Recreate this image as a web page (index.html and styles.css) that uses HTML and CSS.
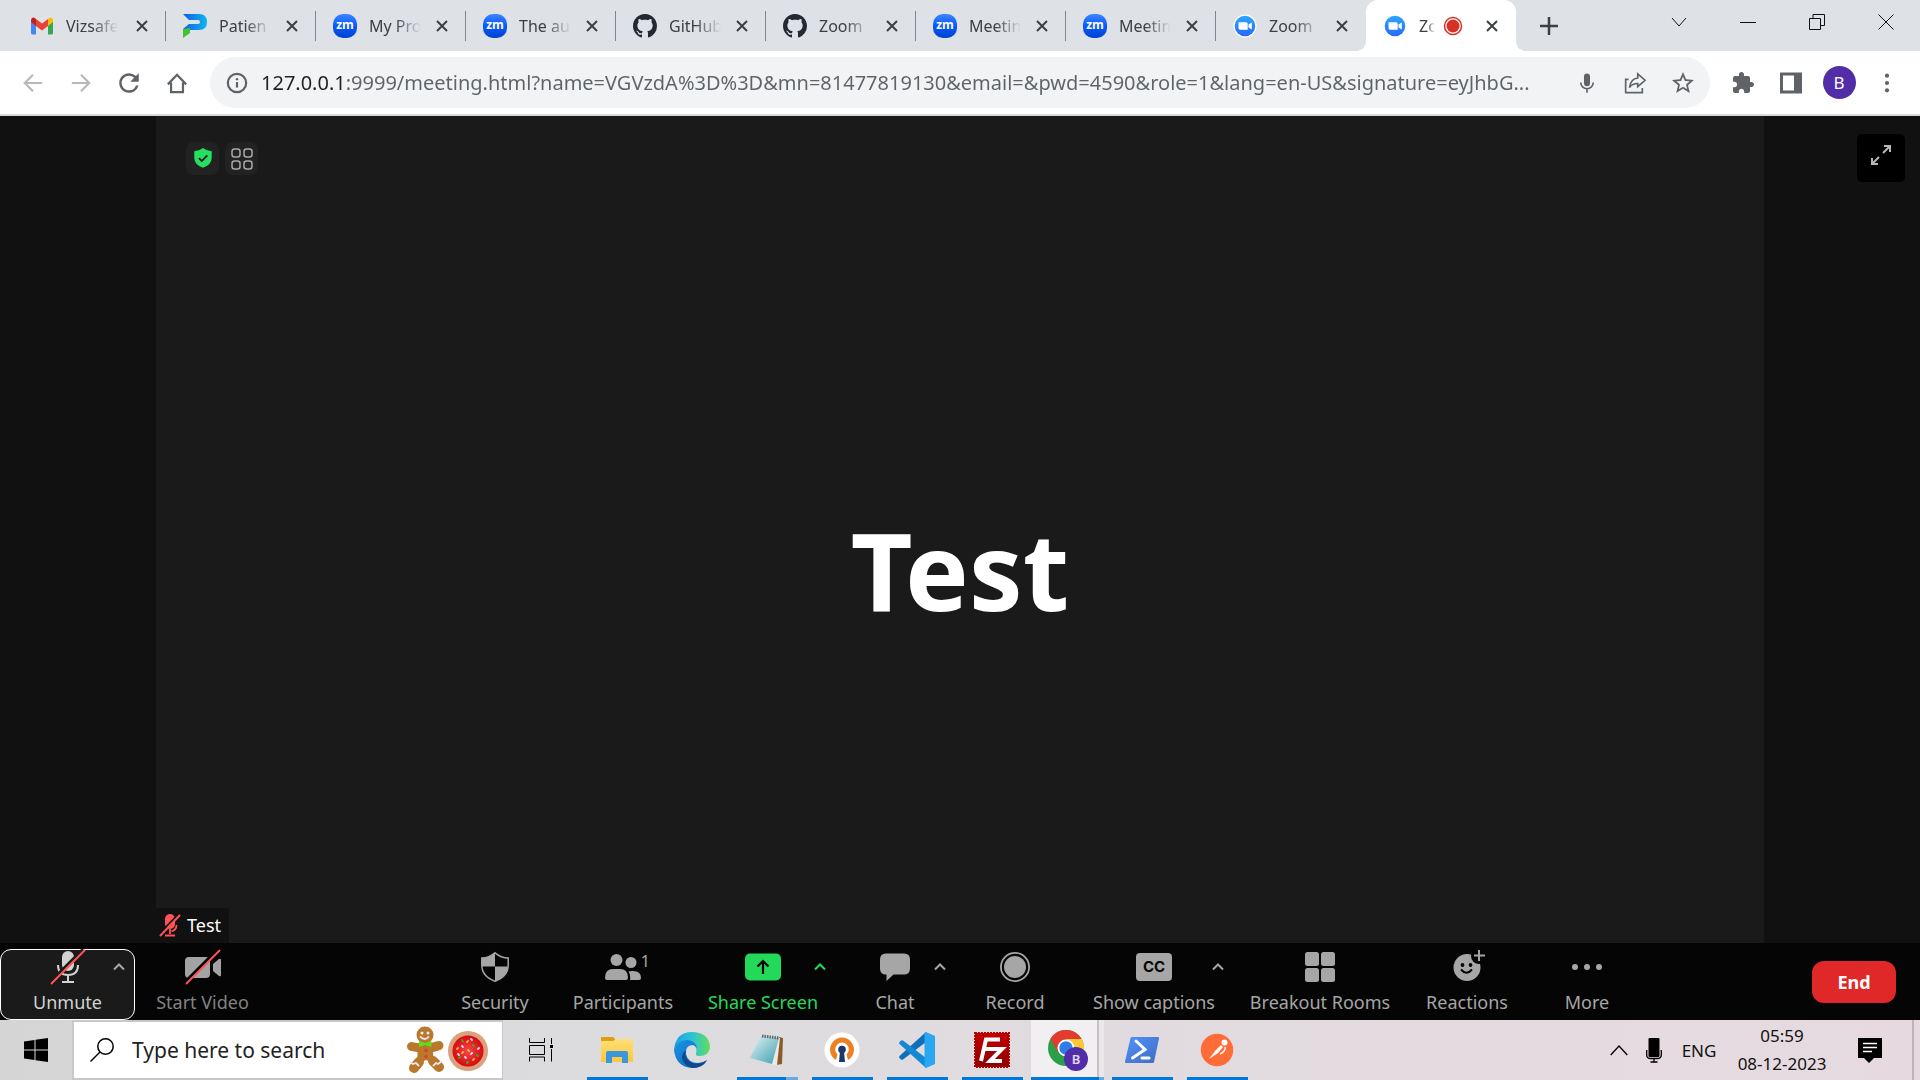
FILE: index.html
```html
<!DOCTYPE html>
<html lang="en">
<head>
<meta charset="utf-8">
<title>Zoom Meeting</title>
<link rel="stylesheet" href="styles.css">
</head>
<body>
<svg class="defs" aria-hidden="true">
  <defs>
    <linearGradient id="gBlue" x1="0" y1="0" x2="0" y2="1"><stop offset="0" stop-color="#2ba9fb"/><stop offset="1" stop-color="#2a67fb"/></linearGradient>
    <linearGradient id="gP" x1="0" y1="0" x2="1" y2="0"><stop offset="0" stop-color="#0a5fe8"/><stop offset="1" stop-color="#12b5ee"/></linearGradient>
    <linearGradient id="gFolder" x1="0" y1="0" x2="0" y2="1"><stop offset="0" stop-color="#ffdf78"/><stop offset="1" stop-color="#fbc73c"/></linearGradient>
    <linearGradient id="gEdgeTop" x1="0" y1="0" x2="1" y2="0"><stop offset="0" stop-color="#1b9fe0"/><stop offset=".5" stop-color="#2cc3d6"/><stop offset="1" stop-color="#62dd5a"/></linearGradient>
    <linearGradient id="gEdgeLow" x1="0" y1="0" x2="1" y2="1"><stop offset="0" stop-color="#1a94e4"/><stop offset="1" stop-color="#0a62b8"/></linearGradient>
    <linearGradient id="gNote" x1="0" y1="0" x2="1" y2="1"><stop offset="0" stop-color="#e3f3f6"/><stop offset="1" stop-color="#3f9fb0"/></linearGradient>
    <linearGradient id="gPs" x1="0" y1="0" x2="1" y2="1"><stop offset="0" stop-color="#5391fe"/><stop offset="1" stop-color="#3e6dbf"/></linearGradient>
    <linearGradient id="gFz" x1="0" y1="0" x2="0" y2="1"><stop offset="0" stop-color="#c40000"/><stop offset="1" stop-color="#8c0000"/></linearGradient>
    <radialGradient id="gJam"><stop offset="0" stop-color="#f24a4a"/><stop offset="1" stop-color="#d8090f"/></radialGradient>
    <symbol id="i-close" viewBox="0 0 12 12"><path d="M1 1l10 10M11 1L1 11" stroke="currentColor" stroke-width="2" fill="none"/></symbol>
    <symbol id="i-github" viewBox="0 0 16 16"><path fill="#24292f" d="M8 0C3.58 0 0 3.58 0 8c0 3.54 2.29 6.53 5.47 7.59.4.07.55-.17.55-.38 0-.19-.01-.82-.01-1.49-2.01.37-2.53-.49-2.69-.94-.09-.23-.48-.94-.82-1.13-.28-.15-.68-.52-.01-.53.63-.01 1.08.58 1.23.82.72 1.21 1.87.87 2.33.66.07-.52.28-.87.51-1.07-1.78-.2-3.64-.89-3.64-3.95 0-.87.31-1.59.82-2.15-.08-.2-.36-1.02.08-2.12 0 0 .67-.21 2.2.82.64-.18 1.32-.27 2-.27s1.36.09 2 .27c1.53-1.04 2.2-.82 2.2-.82.44 1.1.16 1.92.08 2.12.51.56.82 1.27.82 2.15 0 3.07-1.87 3.75-3.65 3.95.29.25.54.73.54 1.48 0 1.07-.01 1.93-.01 2.2 0 .21.15.46.55.38A8.01 8.01 0 0 0 16 8c0-4.42-3.58-8-8-8z"/></symbol>
    <symbol id="i-zoom" viewBox="0 0 24 24"><circle cx="12" cy="12" r="11.5" fill="#fff"/><circle cx="12" cy="12" r="10.3" fill="url(#gBlue)"/><path d="M5.5 8.3h7.6q1.6 0 1.6 1.6v5.8H7.2q-1.7 0-1.7-1.7zM15.5 10.6l3.3-2.2v7.2l-3.3-2.2z" fill="#fff"/></symbol>
    <symbol id="i-caret" viewBox="0 0 12 8"><path d="M1 6.5l5-5 5 5" stroke="currentColor" stroke-width="2" fill="none"/></symbol>
  </defs>
</svg>

<div class="screen">
  <header class="tabstrip">
    <nav class="tabs" aria-label="Open tabs">
      <div class="tab">
        <svg class="favicon" viewBox="0 0 24 24"><path d="M1 7v12q0 1.500 1.500 1.500H6V11z" fill="#4285f4"/><path d="M23 7v12q0 1.500-1.500 1.500H18V11z" fill="#34a853"/><path d="M18 5l1.600-1.200Q21 3 22 4q1 1 1 2.300V8l-5 4z" fill="#fbbc04"/><path d="M6 5L4.400 3.800Q3 3 2 4 1 5 1 6.300V8l5 4z" fill="#c5221f"/><path d="M6 5l6 4.600L18 5v7l-6 4.500L6 12z" fill="#ea4335"/></svg>
        <button class="tab-title">Vizsafe</button><button class="tab-close" aria-label="Close tab"><svg><use href="#i-close"/></svg></button>
      </div>
      <div class="tab">
        <svg class="favicon" viewBox="0 0 24 24"><path d="M0 0h16q8 0 8 8t-8 8H7L0 20v-5l6-5h9q2 0 2-2t-2-2H6z" fill="url(#gP)"/><path d="M0 15l7-1v5l-7 5z" fill="#45c131"/></svg>
        <button class="tab-title">Patien</button><button class="tab-close" aria-label="Close tab"><svg><use href="#i-close"/></svg></button>
      </div>
      <div class="tab"><span class="zm">zm</span><button class="tab-title">My Pro</button><button class="tab-close" aria-label="Close tab"><svg><use href="#i-close"/></svg></button></div>
      <div class="tab"><span class="zm">zm</span><button class="tab-title">The au</button><button class="tab-close" aria-label="Close tab"><svg><use href="#i-close"/></svg></button></div>
      <div class="tab"><svg class="favicon"><use href="#i-github"/></svg><button class="tab-title">GitHub</button><button class="tab-close" aria-label="Close tab"><svg><use href="#i-close"/></svg></button></div>
      <div class="tab"><svg class="favicon"><use href="#i-github"/></svg><button class="tab-title">Zoom</button><button class="tab-close" aria-label="Close tab"><svg><use href="#i-close"/></svg></button></div>
      <div class="tab"><span class="zm">zm</span><button class="tab-title">Meetin</button><button class="tab-close" aria-label="Close tab"><svg><use href="#i-close"/></svg></button></div>
      <div class="tab"><span class="zm">zm</span><button class="tab-title">Meetin</button><button class="tab-close" aria-label="Close tab"><svg><use href="#i-close"/></svg></button></div>
      <div class="tab last"><svg class="favicon"><use href="#i-zoom"/></svg><button class="tab-title">Zoom</button><button class="tab-close" aria-label="Close tab"><svg><use href="#i-close"/></svg></button></div>
      <div class="tab active"><svg class="favicon"><use href="#i-zoom"/></svg><button class="tab-title short">Zo</button><svg class="rec" viewBox="0 0 20 20"><circle cx="10" cy="10" r="6.500" fill="#d93025"/><circle cx="10" cy="10" r="8.500" fill="none" stroke="#d93025" stroke-width="1.500"/></svg><button class="tab-close" aria-label="Close tab"><svg><use href="#i-close"/></svg></button></div>
    </nav>
    <button class="new-tab" aria-label="New tab"><svg viewBox="0 0 18 18"><path d="M9 0v18M0 9h18" stroke="#3c4043" stroke-width="2.500"/></svg></button>
    <div class="window-controls">
      <button aria-label="Search tabs"><svg viewBox="0 0 16 16"><path d="M1 4l7 8 7-8"/></svg></button>
      <button aria-label="Minimize"><svg viewBox="0 0 16 16"><path d="M0 8.500h16"/></svg></button>
      <button aria-label="Restore"><svg viewBox="0 0 16 16"><path d="M.5 4.500h11v11H.5zM4 4.500v-4h11.500v11H12"/></svg></button>
      <button aria-label="Close"><svg viewBox="0 0 16 16"><path d="M.5.5l15 15M15.500.5l-15 15"/></svg></button>
    </div>
  </header>

  <div class="toolbar">
    <button class="tb dim" aria-label="Back"><svg viewBox="0 0 24 24"><path d="M22 12H3.500M12 3L3 12l9 9" class="line"/></svg></button>
    <button class="tb dim" aria-label="Forward"><svg viewBox="0 0 24 24"><path d="M2 12h18.500M12 3l9 9-9 9" class="line"/></svg></button>
    <button class="tb" aria-label="Reload"><svg viewBox="3 3 18 18"><path d="M17.650 6.350A7.958 7.958 0 0 0 12 4c-4.420 0-7.990 3.580-7.990 8s3.570 8 7.990 8c3.730 0 6.840-2.550 7.730-6h-2.080A5.990 5.990 0 0 1 12 18c-3.310 0-6-2.690-6-6s2.690-6 6-6c1.660 0 3.140.69 4.220 1.780L13 11h7V4l-2.350 2.350z"/></svg></button>
    <button class="tb" aria-label="Home"><svg viewBox="0 0 24 24"><path d="M2 13.500L12 3l10 10.500M5.500 11.500v10.500h13V11.500" class="line"/></svg></button>
    <div class="omnibox">
      <button class="tb info" aria-label="Site information"><svg viewBox="0 0 24 24"><circle cx="12" cy="12" r="10" class="line"/><path d="M12 11v6" class="line"/><circle cx="12" cy="7.800" r="1.300"/></svg></button>
      <input class="url" type="text" aria-label="Address" value="127.0.0.1:9999/meeting.html?name=VGVzdA%3D%3D&amp;mn=81477819130&amp;email=&amp;pwd=4590&amp;role=1&amp;lang=en-US&amp;signature=eyJhbG...">
      <button class="tb" aria-label="Voice search"><svg viewBox="0 0 24 24"><path d="M12 15.500a3.300 3.300 0 0 0 3.300-3.300V5a3.300 3.300 0 0 0-6.600 0v7.200a3.300 3.300 0 0 0 3.300 3.300z"/><path d="M5.200 11.500a6.800 6.800 0 0 0 13.600 0M12 18.500v4" class="thin"/></svg></button>
      <button class="tb" aria-label="Share"><svg viewBox="0 0 24 24"><path d="M5 8H1.800v14.500H20v-5M15 2l8 7-8 7V12.500q-6.500 0-9 4.500 1-9.500 9-10.500z" class="thin"/></svg></button>
      <button class="tb" aria-label="Bookmark"><svg viewBox="2 2 20 20"><path d="M22 9.240l-7.190-.62L12 2 9.190 8.630 2 9.240l5.460 4.730L5.820 21 12 17.270 18.180 21l-1.630-7.030L22 9.240zM12 15.400l-3.760 2.270 1-4.280-3.320-2.880 4.380-.38L12 6.100l1.710 4.040 4.380.38-3.320 2.880 1 4.280L12 15.400z"/></svg></button>
    </div>
    <button class="tb" aria-label="Extensions"><svg viewBox="1 1 22 22"><path d="M20.500 11H19V7c0-1.100-.9-2-2-2h-4V3.500C13 2.120 11.880 1 10.500 1S8 2.120 8 3.500V5H4c-1.100 0-1.990.9-1.990 2v3.800H3.500c1.490 0 2.700 1.210 2.700 2.700s-1.210 2.700-2.700 2.700H2V20c0 1.100.9 2 2 2h3.800v-1.500c0-1.490 1.210-2.700 2.700-2.700 1.490 0 2.700 1.210 2.700 2.700V22H17c1.100 0 2-.9 2-2v-4h1.500c1.380 0 2.500-1.120 2.500-2.500S21.880 11 20.500 11z"/></svg></button>
    <button class="tb" aria-label="Side panel"><svg viewBox="1 1 22 22"><path d="M1 1.500h22v21H1zM4 4.500v15h11v-15z" fill-rule="evenodd"/></svg></button>
    <button class="tb" aria-label="Profile"><span class="avatar">B</span></button>
    <button class="tb" aria-label="Menu"><svg viewBox="0 0 24 24"><circle cx="12" cy="4" r="2.300"/><circle cx="12" cy="12" r="2.300"/><circle cx="12" cy="20" r="2.300"/></svg></button>
  </div>

  <main class="meeting">
    <section class="stage">
      <div class="stage-tools">
        <button aria-label="Meeting information"><svg viewBox="0 0 20 24"><path d="M10 0q4 3.200 9.500 3.500v7Q19.500 18 10 21.500.5 18 .5 10.500v-7Q6 3.200 10 0z" fill="#25e060"/><path d="M5.500 11l3.200 3.200 6-6.200" fill="none" stroke="#1a1a1a" stroke-width="2"/></svg></button>
        <button aria-label="View"><svg viewBox="0 0 22 22" fill="none" stroke="#a8a8a8" stroke-width="1.500"><rect x="1" y="1" width="8" height="8" rx="2.500"/><rect x="13" y="1" width="8" height="8" rx="2.500"/><rect x="1" y="13" width="8" height="8" rx="2.500"/><rect x="13" y="13" width="8" height="8" rx="2.500"/></svg></button>
      </div>
      <h1 class="speaker">Test</h1>
      <div class="nametag"><svg viewBox="0 0 22 24"><rect x="6" y="1" width="10" height="15" rx="5" fill="#ff5257"/><path d="M11 16v5M6 22.500h10M17.500 12q0 5-5 6.500" stroke="#ff5257" stroke-width="1.800" fill="none"/><path d="M0 21L20 1" stroke="#111" stroke-width="2"/><path d="M1 23L21 2" stroke="#ff5257" stroke-width="2"/></svg>Test</div>
    </section>
    <button class="fullscreen" aria-label="Full screen"><svg viewBox="0 0 20 20" fill="none" stroke="#b8b8b8" stroke-width="2"><path d="M13 1h6v6M19 1l-7 7M7 19H1v-6M1 19l7-7"/></svg></button>
  </main>

  <footer class="controls">
    <div class="group">
      <div class="tool w135 focused"><button><svg class="wide" viewBox="0 0 36 36"><rect x="12" y="2" width="12" height="20" rx="6" fill="#d2d2d2"/><path d="M8 16q0 10 10 10t10-10M18 26v6M12 33h12" stroke="#d2d2d2" stroke-width="2" fill="none"/><path d="M-1 34L33 0" stroke="#1a1a1a" stroke-width="2.500"/><path d="M1 35L35 1" stroke="#ff5257" stroke-width="2"/></svg>Unmute</button><button class="more" aria-label="Audio options"><svg><use href="#i-caret"/></svg></button></div>
      <div class="tool w135 faint"><button><svg class="wide" viewBox="0 0 36 36"><rect x="0" y="8" width="25" height="21" rx="4" fill="#a3a3a3"/><path d="M28 15l6-5q2-1 2 1v15q0 2-2 1l-6-5z" fill="#a3a3a3"/><path d="M-1 34L33 0" stroke="#050505" stroke-width="3"/><path d="M1 35L35 1" stroke="#ff5257" stroke-width="2"/></svg>Start Video</button></div>
    </div>
    <div class="group">
      <div class="tool w120"><button><svg viewBox="0 0 36 30"><path d="M18 .8q6 5 13.200 5.200V13Q31.200 24.500 18 29.200 4.800 24.500 4.800 13V6Q12 5.800 18 .8z" fill="none" stroke="#a6a6a6" stroke-width="1.500"/><path d="M18 1v13.500H5V6Q12 5.800 18 1zM18 14.500h13Q30 25 18 29z" fill="#a6a6a6"/></svg>Security</button></div>
      <div class="tool w136"><button><svg viewBox="0 0 36 30" fill="#a6a6a6"><circle cx="11.500" cy="8" r="6"/><circle cx="26" cy="10.500" r="5.500"/><path d="M0 26q0-9 8-9h7q8 0 8 9 0 2-2 2H2q-2 0-2-2zM25 28q.8-5-1.500-8.500Q25 19 27 19h1q8 0 8 7 0 2-2 2z"/></svg>Participants</button><span class="count">1</span></div>
      <div class="tool w144 green"><button><svg viewBox="0 0 36 30"><rect y="1.500" width="36" height="27" rx="5" fill="#23d959"/><path d="M18 22V10M12.500 14.500L18 9l5.500 5.500" fill="none" stroke="#050505" stroke-width="2.200"/></svg>Share Screen</button><button class="more" aria-label="Share options"><svg><use href="#i-caret"/></svg></button></div>
      <div class="tool w120"><button><svg viewBox="0 0 36 30"><path d="M9 1.500h18q6 0 6 6v9q0 6-6 6H16.500L9.500 29v-6.500H9q-6 0-6-6v-9q0-6 6-6z" fill="#a6a6a6"/></svg>Chat</button><button class="more" aria-label="Chat options"><svg><use href="#i-caret"/></svg></button></div>
      <div class="tool w120"><button><svg viewBox="0 0 36 30"><circle cx="18" cy="15" r="14.100" fill="none" stroke="#a6a6a6" stroke-width="1.800"/><circle cx="18" cy="15" r="11" fill="#a6a6a6"/></svg>Record</button></div>
      <div class="tool w158"><button><span class="cc">CC</span>Show captions</button><button class="more" aria-label="Caption options"><svg><use href="#i-caret"/></svg></button></div>
      <div class="tool w174"><button><svg viewBox="0 0 36 30" fill="#a6a6a6"><rect x="3" width="14" height="14" rx="2.500"/><rect x="19" width="14" height="14" rx="2.500"/><rect x="3" y="16" width="14" height="14" rx="2.500"/><rect x="19" y="16" width="14" height="14" rx="2.500"/></svg>Breakout Rooms</button></div>
      <div class="tool w120"><button><svg viewBox="0 0 36 30"><circle cx="18" cy="15.500" r="13.500" fill="#a6a6a6"/><circle cx="30" cy="4" r="8" fill="#050505"/><path d="M30-2v11M25 3.500h11" stroke="#a6a6a6" stroke-width="2"/><circle cx="13.500" cy="13" r="1.900" fill="#050505"/><circle cx="21.500" cy="13" r="1.900" fill="#050505"/><path d="M12 17.500q5.500 6.500 11 0" fill="none" stroke="#050505" stroke-width="2"/></svg>Reactions</button></div>
      <div class="tool w120"><button><svg viewBox="0 0 36 30" fill="#a6a6a6"><circle cx="6" cy="15" r="3"/><circle cx="18" cy="15" r="3"/><circle cx="30" cy="15" r="3"/></svg>More</button></div>
    </div>
    <button class="end">End</button>
  </footer>

  <div class="taskbar">
    <button class="start" aria-label="Start"><svg viewBox="0 0 24 24"><path d="M0 3.500l10.500-1.500v9.500H0zM11.500 1.800L24 0v11.500H11.500zM0 12.500h10.500V22L0 20.500zM11.500 12.500H24V24l-12.500-1.800z"/></svg></button>
    <div class="search">
      <svg class="lens" viewBox="0 0 24 24"><circle cx="15.500" cy="8.500" r="7.700"/><path d="M10 14L.5 23.500"/></svg>
      <input type="text" aria-label="Type here to search" placeholder="Type here to search">
      <svg class="treat" viewBox="0 0 80 50">
        <g stroke="#b9782c" fill="none" stroke-linecap="round"><path d="M4.500 21.500Q10 23 18 23t14-2.500" stroke-width="9"/><path d="M12 37l-5 6M26 36l6 6" stroke-width="10"/></g>
        <path d="M11 18h14l2 20-8-3-9 4z" fill="#b9782c"/><circle cx="18" cy="10" r="8.500" fill="#b9782c"/>
        <g fill="none" stroke="#f0e6f2" stroke-width="1.800"><path d="M3 37l3 2 3-1 3 3M26 41l3-3 2 1 4-3M13 11.500q5 5 9 0"/></g>
        <circle cx="15" cy="8" r="1.500" fill="#e9f0ff"/><circle cx="21" cy="8" r="1.500" fill="#e9f0ff"/>
        <path d="M12 16l6 2 6.500-2v6L18 20l-6 2z" fill="#5ee019"/><circle cx="19" cy="25.500" r="1.700" fill="#e23d28"/><circle cx="19" cy="31.500" r="1.700" fill="#e23d28"/>
        <circle cx="61" cy="26" r="20" fill="#dba07c"/><circle cx="61" cy="26" r="15.500" fill="url(#gJam)"/>
        <g stroke-width="1.800" stroke-linecap="round"><path d="M55 15l1 1.500M66 20l1 1M52 33l1-1M70 30l1 1M60 38l1-1" stroke="#2fb52a"/><path d="M60 17l1-1M50 24l1-1M61 25l1 1M66 35l1-1M55 28l1-1" stroke="#ffb637"/><path d="M64 14l1 1M55 21l1 1M71 24l1-1M58 32l1 1M64 29l1-1M51 29l1 1" stroke="#ffd9f5"/></g>
      </svg>
    </div>
    <button class="taskview" aria-label="Task view"><svg viewBox="0 0 24 24"><path d="M.5 0v4.500h15V0M.5 23.500V19h15v4.500M.5 7.500h15v9H.5zM22.500 0v6M22.500 11v12.500"/><rect x="21" y="7" width="3" height="3"/></svg></button>
    <nav class="apps" aria-label="Running apps">
      <button class="app running" aria-label="File Explorer"><svg viewBox="0 0 36 36"><path d="M2 5h12l2 2v5H2z" fill="#e19c12"/><path d="M2 9h12l3-2h17v23H2z" fill="url(#gFolder)"/><path d="M7 31V21q0-2 2-2h18q2 0 2 2v10h-6v-6H13v6z" fill="#3a96dd"/></svg></button>
      <button class="app" aria-label="Edge"><svg viewBox="0 0 36 36"><path d="M0 19Q1 0 18 0q16 0 18 14 0 10-11 10-4 0-3-3 1-2 0-5-2-5-7-5Q5 11 0 19z" fill="url(#gEdgeTop)"/><path d="M0 18Q4 8 13 8q8 0 10 8-2-3-5-3-7 1-6 9 2 9 12 9 5 0 9-3-5 8-15 8Q2 35 0 18z" fill="url(#gEdgeLow)"/><path d="M12 18q-2 5 2 10 7 7 19 .5-5 8-15 7.500-9-3-10-10 0-5 4-8z" fill="#12468f"/></svg></button>
      <button class="app running stacked" aria-label="Notepad"><svg viewBox="0 0 36 36"><path d="M30 5l4 1-1 26-6 1z" fill="#8a5a2c"/><path d="M12 4l19 2-3 27-8-1z" fill="#ece9e0"/><path d="M12 4l18 2-7 26L1 26z" fill="url(#gNote)"/><path d="M13 4l17 2" stroke="#5d6870" stroke-width="3" stroke-dasharray="1.500 1"/></svg></button>
      <button class="app running" aria-label="OpenVPN"><svg viewBox="0 0 36 36"><circle cx="18" cy="18" r="17.500" fill="#fff"/><path d="M12 28a12 12 0 1 1 12 0l-1.500-5.500a6.800 6.800 0 1 0-9 0z" fill="#ee7f22"/><circle cx="18" cy="17.500" r="3.800" fill="#1b3768"/><path d="M16 19h4l1 11h-6z" fill="#1b3768"/></svg></button>
      <button class="app running" aria-label="Visual Studio Code"><svg viewBox="0 0 36 36"><path d="M27 0v10L4 27.500q-1 .5-2 0L.5 26q-1-1 0-2z" fill="#0f6fb8"/><path d="M27 36V26L4 8.500q-1-.5-2 0L.5 10q-1 1 0 2z" fill="#1489d3"/><path d="M27 0l9 4v28l-9 4q-1.500-.5-1.500-2V2q0-1.500 1.500-2z" fill="#2aa7f2"/></svg></button>
      <button class="app running" aria-label="FileZilla"><svg viewBox="0 0 36 36"><rect x="1" y="1" width="34" height="34" fill="url(#gFz)" stroke="#b50000" stroke-width="2" stroke-dasharray="2 1"/><path d="M7 29L12 7.500h14M10 17h8M17 17h11L16 29h12" fill="none" stroke="#fff" stroke-width="4"/></svg></button>
      <button class="app running current" aria-label="Chrome"><svg viewBox="0 0 40 40"><circle cx="18" cy="18" r="18" fill="#2b9e48"/><path d="M2.400 9A18 18 0 0 1 33.600 9H18L10.200 22.500z" fill="#e33b2e"/><path d="M33.600 9A18 18 0 0 1 18 36l8-13.500Q29 14 18 9z" fill="#fcc934"/><circle cx="18" cy="18" r="8.500" fill="#fff"/><circle cx="18" cy="18" r="6.700" fill="#2f7de9"/></svg><span class="badge">B</span></button>
      <button class="app running" aria-label="PowerShell"><svg viewBox="0 0 36 36"><path d="M8 5h26q1.500 0 1 1.500L30 30q-.3 1-1.500 1H2q-1.500 0-1-1.500L6.500 6q.3-1 1.500-1z" fill="url(#gPs)"/><path d="M12 9l9 8.500L8.500 26M18 26h7" fill="none" stroke="#fff" stroke-width="3" stroke-linecap="round"/></svg></button>
      <button class="app running" aria-label="Postman"><svg viewBox="0 0 36 36"><circle cx="18" cy="18" r="16.200" fill="#ff6c37"/><circle cx="25.500" cy="10.500" r="3" fill="#fff"/><path d="M22 13l2 2-5 6-9 6 6-8z" fill="#fff"/><path d="M26 15q1 4-5 7" fill="none" stroke="#fff" stroke-width="1.500"/></svg></button>
    </nav>
    <div class="tray">
      <button class="t-icon" aria-label="Hidden icons"><svg viewBox="0 0 18 12"><path d="M.7 11L9 2l8.300 9"/></svg></button>
      <button class="t-icon" aria-label="Microphone in use"><svg viewBox="0 0 16 26"><rect x="2.500" y="1" width="11" height="19" rx="1" fill="#000" stroke="none"/><path d="M.7 13v5q0 3.500 4 3.500h6.600q4 0 4-3.500v-5M8 21v4M4.500 25h7"/></svg></button>
      <button class="lang">ENG</button>
      <button class="clock"><time>05:59</time><time>08-12-2023</time></button>
      <button class="t-icon note" aria-label="Notifications"><svg viewBox="0 0 24 25"><path d="M0 0h24v20h-8l-5 5-5-5H0z" fill="#000" stroke="none"/><path d="M5 5.500h14M5 9.500h14M5 13.500h9" stroke="#fff"/></svg></button>
      <button class="desktop" aria-label="Show desktop"></button>
    </div>
  </div>
</div>
</body>
</html>
```
FILE: styles.css
```css
* { box-sizing: border-box; }
body { margin: 0; background: #111; font-family: "Noto Sans", "Open Sans", sans-serif; }
button, input { margin: 0; padding: 0; border: 0; background: none; font: inherit; color: inherit; outline: 0; }
svg { display: block; overflow: visible; flex: none; }
.defs { position: absolute; width: 0; height: 0; }
.screen { display: flex; flex-direction: column; min-height: 100vh; }

/* Browser tabs */
.tabstrip { display: flex; height: 51px; background: #dee1e6; color: #3c4043; }
.tabs { display: flex; padding-left: 13px; }
.tab { position: relative; display: flex; align-items: center; width: 150px; padding: 0 14px 0 17px; }
.tab:first-child { width: 153px; }
.tab::after { content: ""; position: absolute; right: 0; top: 11px; width: 1px; height: 30px; background: #80868b; }
.tab.last::after { display: none; }
.tab.active { background: #fff; border-radius: 12px 12px 0 0; }
.tab.active::before, .tab.active::after { content: ""; position: absolute; top: auto; bottom: 0; width: 10px; height: 10px; }
.tab.active::before { left: -10px; background: radial-gradient(circle at 0 0, transparent 10px, #fff 10px); }
.tab.active::after { right: -10px; background: radial-gradient(circle at 100% 0, transparent 10px, #fff 10px); }
.favicon { width: 24px; height: 24px; }
.zm { width: 24px; height: 24px; border-radius: 10px; background: linear-gradient(#3f85ff, #0b5cff 45%, #0043cf); color: #fff; font: bold 12px/22px "Open Sans", sans-serif; text-align: center; }
.tab-title { width: 52px; margin-left: 12px; overflow: hidden; white-space: nowrap; text-align: left; font-size: 16px; line-height: 24px; mask-image: linear-gradient(90deg, #000 50%, transparent); }
.tab-title.short { width: 16px; }
.rec { width: 20px; height: 20px; margin-left: 8px; }
.tab-close { margin-left: auto; padding: 4px; }
.tab-close svg { width: 12px; height: 12px; }
.new-tab { width: 66px; display: grid; place-items: center; }
.new-tab svg { width: 18px; height: 18px; }
.window-controls { display: flex; margin-left: auto; height: 43px; }
.window-controls button { width: 69px; display: grid; place-items: center; }
.window-controls svg { width: 16px; height: 16px; fill: none; stroke: #111; }

/* Address row */
.toolbar { display: flex; align-items: center; height: 65px; padding: 0 9px; background: #fff; border-bottom: 2px solid #d9d9d9; color: #5f6368; }
.tb { width: 48px; height: 48px; flex: none; display: grid; place-items: center; }
.tb svg { width: 22px; height: 22px; fill: #5f6368; }
.tb .line { fill: none; stroke: #5f6368; stroke-width: 2.4; }
.tb .thin { fill: none; stroke: #5f6368; stroke-width: 1.8; }
.dim { opacity: .45; }
.omnibox { flex: 1; display: flex; align-items: center; height: 51px; margin: 0 9px; padding: 0 3px; border-radius: 26px; background: #f1f3f4; }
.url { flex: 1; min-width: 0; height: 36px; font-size: 20px; color: transparent; background: linear-gradient(90deg, #202124 82px, #5f6368 82px); -webkit-background-clip: text; background-clip: text; }
.avatar { width: 33px; height: 33px; border-radius: 50%; background: #512da8; color: #fff; font-size: 17px; line-height: 33px; text-align: center; }

/* Meeting area */
.meeting { position: relative; flex: 1; display: flex; justify-content: center; background: #111; }
.stage { position: relative; width: 83.75%; display: grid; place-items: center; padding-top: 80px; background: #1a1a1a; }
.stage-tools { position: absolute; left: 30px; top: 26px; display: flex; gap: 6px; }
.stage-tools button { width: 33px; height: 33px; display: grid; place-items: center; border-radius: 8px; background: #222; }
.stage-tools svg { width: 22px; height: 22px; }
.speaker { margin: 0; color: #fff; font-size: 107px; line-height: 146px; font-weight: 700; }
.nametag { position: absolute; left: 0; bottom: 0; display: flex; align-items: center; gap: 6px; height: 35px; padding: 0 8px 2px 3px; background: #111; color: #fff; font-size: 18px; }
.nametag svg { width: 22px; height: 24px; }
.fullscreen { position: absolute; right: 15px; top: 18px; width: 48px; height: 48px; display: grid; place-items: center; padding-bottom: 6px; border-radius: 5px; background: #000; }
.fullscreen svg { width: 20px; height: 20px; }

/* Meeting controls */
.controls { display: flex; align-items: center; justify-content: space-between; height: 77px; padding-right: 24px; background: #050505; color: #a6a6a6; }
.group { display: flex; align-self: stretch; }
.tool { position: relative; display: flex; }
.tool > button:first-child { flex: 1; display: flex; flex-direction: column; align-items: center; gap: 8px; padding-top: 9px; font-size: 18px; line-height: 24px; white-space: nowrap; }
.tool button > svg { width: 36px; height: 30px; }
.tool button > svg.wide { width: 36px; height: 36px; margin: -3px 0; }
.tool .more { position: absolute; right: 5px; top: 14px; width: 20px; height: 20px; display: grid; place-items: center; }
.tool .more > svg { width: 12px; height: 8px; }
.focused { margin-top: 6px; border: 1px solid #fff; border-radius: 11px; background: #1a1a1a; color: #d2d2d2; }
.focused > button:first-child { padding-top: 2px; }
.focused .more { top: 7px; color: #a6a6a6; }
.faint { color: #828282; }
.green { color: #23d959; }
.count { position: absolute; right: 41px; top: 8px; font-size: 16px; line-height: 20px; }
.cc { width: 36px; height: 28px; margin: 1px 0; border-radius: 4px; background: #a6a6a6; color: #050505; font: bold 15px/28px "Inter", sans-serif; }
.w120 { width: 120px; }
.w135 { width: 135px; }
.w136 { width: 136px; }
.w144 { width: 144px; }
.w158 { width: 158px; }
.w174 { width: 174px; }
.end { width: 84px; height: 42px; border-radius: 12px; background: #e02828; color: #fff; font-size: 18px; font-weight: 700; }

/* Taskbar */
.taskbar { display: flex; height: 60px; background: linear-gradient(90deg, #d5d5d5, #dcdcde 30%, #e1dbdf 60%, #e6dae0); color: #111; }
.start { width: 72px; display: grid; place-items: center; }
.start svg { width: 24px; height: 24px; }
.search { display: flex; align-items: center; width: 431px; border: 1px solid #c8c8c8; border-width: 2px 1px 2px 2px; background: #fff; }
.lens { width: 24px; height: 24px; margin-left: 16px; fill: none; stroke: #000; stroke-width: 1.5; }
.search input { flex: 1; min-width: 0; margin-left: 18px; font-size: 21px; }
.search input::placeholder { color: #222; opacity: 1; }
.treat { width: 80px; height: 50px; margin-right: 15px; }
.taskview { width: 76px; display: grid; place-items: center; }
.taskview svg { width: 24px; height: 24px; fill: none; stroke: #000; }
.taskview rect { fill: #000; stroke: none; }
.apps { display: flex; }
.app { position: relative; width: 75px; display: grid; place-items: center; }
.app svg { width: 36px; height: 36px; }
.running::after { content: ""; position: absolute; left: 8px; bottom: 0; width: 61px; height: 3px; background: #0078d7; }
.stacked::after { background: linear-gradient(90deg, #0078d7 49px, #6aaae0 49px); }
.current { background: linear-gradient(90deg, transparent 2px, #f1eff1 2px 68px, #c6c3c6 68px 70px, #ebe7ea 70px); }
.current::after { left: 2px; width: 73px; background: linear-gradient(90deg, #0078d7 68px, #6aaae0 68px); }
.current svg { width: 40px; height: 40px; margin-left: 2px; }
.badge { position: absolute; left: 35px; top: 27px; width: 24px; height: 24px; border-radius: 50%; background: #512da8; color: #e2d8f5; font-size: 13px; font-weight: 600; line-height: 24px; }
.tray { display: flex; margin-left: auto; font-size: 17px; }
.t-icon { width: 35px; display: grid; place-items: center; }
.t-icon svg { width: 18px; height: 26px; fill: none; stroke: #000; stroke-width: 1.3; }
.t-icon.note { width: 54px; }
.t-icon.note svg { width: 24px; height: 25px; }
.lang { width: 50px; padding-left: 6px; }
.clock { width: 122px; display: flex; flex-direction: column; align-items: center; justify-content: center; font-size: 17px; line-height: 28px; }
.desktop { width: 8px; margin-left: 15px; border-left: 2px solid #bdb3b9; }
```
